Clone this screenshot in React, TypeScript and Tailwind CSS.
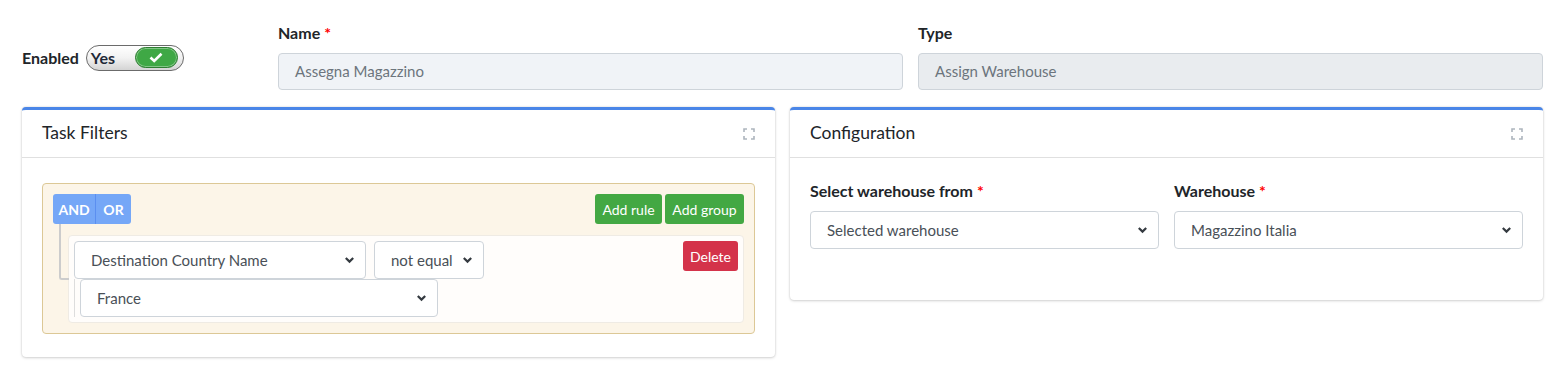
import React from 'react'

const font = { fontFamily: 'Lato, "Noto Sans", sans-serif' }

const Chevron = () => (
  <svg className="pointer-events-none absolute right-[10px] top-1/2 -translate-y-1/2" width="11" height="8" viewBox="0 0 11 8">
    <path d="M1.8 2 5.5 5.6 9.2 2" fill="none" stroke="#343a40" strokeWidth="2.2" />
  </svg>
)

type SelectProps = { value: string; className?: string }

const FakeSelect: React.FC<SelectProps> = ({ value, className = '' }) => (
  <div className={`relative h-[38px] rounded-[4px] border border-[#ced4da] bg-white ${className}`}>
    <select
      className="h-full w-full appearance-none bg-transparent pl-4 pr-6 text-[15px] text-[#495057] outline-none"
      defaultValue={value}
    >
      <option>{value}</option>
    </select>
    <Chevron />
  </div>
)

const ExpandIcon = () => (
  <svg width="12" height="12" viewBox="0 0 12 12" className="text-[#adb5bd]">
    <path d="M1 4V1h3M8 1h3v3M11 8v3H8M4 11H1V8" fill="none" stroke="currentColor" strokeWidth="1.6" />
  </svg>
)

const Card: React.FC<{ title: string; children: React.ReactNode }> = ({ title, children }) => (
  <div className="rounded-[4px] border-t-[3px] border-[#4a86e8] bg-white shadow-[0_0_2px_rgba(0,0,0,0.15),0_1px_3px_rgba(0,0,0,0.15)]">
    <div className="flex h-[48px] items-center justify-between border-b border-[#e0e0e0] px-5">
      <h3 className="text-[17.5px] font-normal text-[#212529]">{title}</h3>
      <ExpandIcon />
    </div>
    {children}
  </div>
)

const Label: React.FC<{ text: string; required?: boolean }> = ({ text, required }) => (
  <label className="mb-2 block h-[24px] text-[16px] font-bold leading-[24px] text-[#212529]">
    {text}
    {required && <span className="ml-1 text-[#ff0000]">*</span>}
  </label>
)

export default function App() {
  return (
    <div style={font} className="min-h-[380px] bg-white pl-[22px] pr-[5px] pt-[21px]">
      {/* top row */}
      <div className="grid grid-cols-[241px_1fr_1fr] gap-[15px]">
        <div className="flex items-center gap-[7px] pt-[4px]">
          <span className="text-[16px] font-bold text-[#212529]">Enabled</span>
          <div className="flex h-[26px] w-[98px] items-center justify-between rounded-full border border-[#6b6b6b] bg-gradient-to-b from-white via-[#f2f2f2] to-[#d4d4d4] pl-[4px] pr-[5px]">
            <span className="text-[16px] font-bold text-[#1f2937]">Yes</span>
            <span className="flex h-[21px] w-[43px] items-center justify-center rounded-full border border-[#2e7d32] bg-[#3fa845] shadow-[inset_0_0_0_1px_rgba(255,255,255,0.35)]">
              <svg width="14" height="11" viewBox="0 0 14 11">
                <path d="M1.5 5.5 5.2 9 12.5 1.8" fill="none" stroke="white" strokeWidth="2.6" />
              </svg>
            </span>
          </div>
        </div>
        <div>
          <Label text="Name" required />
          <div className="flex h-[37px] items-center rounded-[4px] border border-[#ced4da] bg-[#f0f3f7] px-4 text-[15px] text-[#6c757d]">
            Assegna Magazzino
          </div>
        </div>
        <div>
          <Label text="Type" />
          <div className="flex h-[37px] items-center rounded-[4px] border border-[#ced4da] bg-[#e9ecef] px-4 text-[15px] text-[#6c757d]">
            Assign Warehouse
          </div>
        </div>
      </div>

      {/* cards */}
      <div className="mt-[17px] grid grid-cols-2 items-start gap-[15px]">
        <Card title="Task Filters">
          <div className="px-5 pb-[23px] pt-[25px]">
            <div className="rounded-[4px] border border-[#dcc896] bg-[#fcf5e8] p-[10px]">
              <div className="flex h-[30px] items-center justify-between">
                <div className="flex h-full overflow-hidden rounded-[3px] text-[14px] font-bold text-white">
                  <button className="w-[42px] bg-[#75a7f7]">AND</button>
                  <button className="w-[36px] border-l border-[#5b8ff0] bg-[#75a7f7]">OR</button>
                </div>
                <div className="flex h-full gap-[3px] text-[14px] text-white">
                  <button className="w-[67px] rounded-[3px] bg-[#43a843]">Add rule</button>
                  <button className="w-[79px] rounded-[3px] bg-[#43a843]">Add group</button>
                </div>
              </div>
              <div className="mt-[11px] pl-[15px]">
                <div className="relative rounded-[4px] border border-[#efebe4] bg-[#fffdfb] p-[5px]">
                  <div className="absolute -left-[10px] -top-[12px] h-[56px] w-[10px] rounded-bl-[3px] border-b-2 border-l-2 border-[#cccccc]" />
                  <div className="flex flex-wrap items-start">
                    <FakeSelect value="Destination Country Name" className="w-[292px]" />
                    <FakeSelect value="not equal" className="ml-[8px] w-[110px]" />
                    <button className="ml-auto h-[30px] w-[55px] rounded-[3px] bg-[#d4334a] text-[14px] text-white">Delete</button>
                    <div className="w-full" />
                    <div className="border-l border-[#dddddd] pl-[5px]">
                      <FakeSelect value="France" className="w-[358px]" />
                    </div>
                  </div>
                </div>
              </div>
            </div>
          </div>
        </Card>
        <Card title="Configuration">
          <div className="grid grid-cols-2 gap-[15px] px-5 pb-[51px] pt-[21px]">
            <div>
              <Label text="Select warehouse from" required />
              <FakeSelect value="Selected warehouse" />
            </div>
            <div>
              <Label text="Warehouse" required />
              <FakeSelect value="Magazzino Italia" />
            </div>
          </div>
        </Card>
      </div>
    </div>
  )
}
